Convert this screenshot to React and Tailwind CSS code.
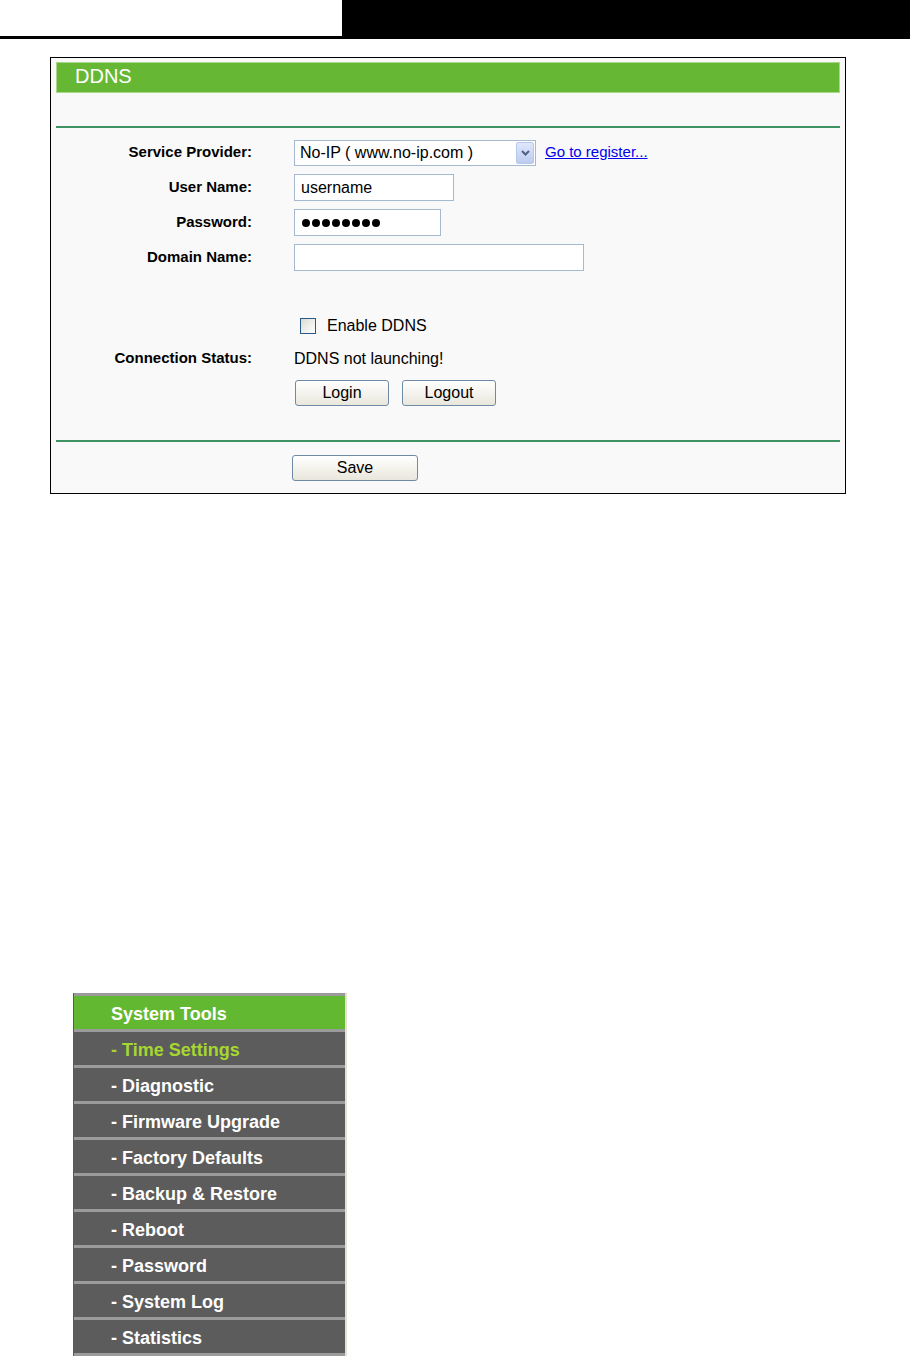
import React from 'react';

const font = { fontFamily: '"Liberation Sans", Arial, sans-serif' };

function Field({ label, children }) {
  return (
    <div className="flex h-[35px] items-center">
      <div className="w-[196px] shrink-0 text-right text-[15px] font-bold text-black">{label}</div>
      <div className="ml-[42px] flex items-center">{children}</div>
    </div>
  );
}

function Button({ children, w }) {
  return (
    <button
      className={`${w} h-[26px] rounded-[3px] border border-[#6f8aa6] bg-gradient-to-b from-white to-[#e9e7dc] text-[16px] leading-none text-black`}
    >
      {children}
    </button>
  );
}

const menu = [
  '- Time Settings',
  '- Diagnostic',
  '- Firmware Upgrade',
  '- Factory Defaults',
  '- Backup & Restore',
  '- Reboot',
  '- Password',
  '- System Log',
  '- Statistics',
];

export default function App() {
  return (
    <div className="min-h-[1357px] bg-white" style={font}>
      {/* Top bar */}
      <div className="flex h-[39px]">
        <div className="w-[342px] border-b-[3px] border-black bg-white" />
        <div className="flex-1 bg-black" />
      </div>

      {/* DDNS panel */}
      <div className="ml-[50px] mt-[18px] w-[796px] border border-black bg-[#f9f9f9] px-[5px] pt-[4px]">
        <div className="flex h-[31px] items-center border border-[#a8d88a] bg-[#66b834] pb-[3px] pl-[18px] text-[20px] text-white">
          DDNS
        </div>
        <div className="h-[33px]" />
        <div className="h-[2px] bg-[#3f9363]" />

        <div className="mt-[7px]">
          <Field label="Service Provider:">
            <div className="flex h-[26px] w-[242px] items-center justify-between border border-[#a5b9d0] bg-white pl-[5px] pr-[1px] text-[16px]">
              <span>No-IP ( www.no-ip.com )</span>
              <span className="flex h-[22px] w-[18px] items-center justify-center rounded-[2px] border border-[#b8c8ea] bg-gradient-to-b from-[#dfe7fb] to-[#bccbef]">
                <svg width="9" height="6" viewBox="0 0 9 6">
                  <path d="M1 1 L4.5 4.5 L8 1" stroke="#4d6185" strokeWidth="2" fill="none" />
                </svg>
              </span>
            </div>
            <a className="ml-[9px] text-[15px] text-[#0000ee] underline">Go to register...</a>
          </Field>
          <Field label="User Name:">
            <div className="flex h-[27px] w-[160px] items-center border border-[#a5b9d0] bg-white pl-[6px] text-[16px]">
              username
            </div>
          </Field>
          <Field label="Password:">
            <div className="flex h-[27px] w-[147px] items-center gap-[2px] border border-[#a5b9d0] bg-white pl-[7px]">
              {Array.from({ length: 8 }).map((_, i) => (
                <span key={i} className="h-[8px] w-[8px] rounded-full bg-black" />
              ))}
            </div>
          </Field>
          <Field label="Domain Name:">
            <div className="h-[27px] w-[290px] border border-[#a5b9d0] bg-white" />
          </Field>
        </div>

        <div className="h-[34px]" />
        <div className="flex h-[34px] items-center pl-[244px]">
          <span className="h-[16px] w-[16px] border border-[#2a5a8a] bg-gradient-to-br from-[#dcdcd6] to-white" />
          <span className="ml-[11px] text-[16px]">Enable DDNS</span>
        </div>
        <div className="flex h-[31px] items-center">
          <div className="w-[196px] shrink-0 text-right text-[15px] font-bold">Connection Status:</div>
          <div className="ml-[42px] text-[16px]">DDNS not launching!</div>
        </div>
        <div className="flex h-[38px] items-center gap-[13px] pl-[239px]">
          <Button w="w-[94px]">Login</Button>
          <Button w="w-[94px]">Logout</Button>
        </div>
        <div className="h-[28px]" />
        <div className="h-[2px] bg-[#3f9363]" />
        <div className="flex h-[51px] items-center pl-[236px]">
          <Button w="w-[126px]">Save</Button>
        </div>
      </div>

      {/* System Tools menu */}
      <div className="ml-[73px] mt-[499px] w-[274px] border-l border-r-2 border-l-[#5a5a5a] border-r-[#e4e1d4]">
        <div className="border-t-[3px] border-[#9b9b9b] bg-[#63b832]">
          <div className="flex h-[33px] items-center pl-[37px] pt-[3px] text-[18px] font-bold text-white">System Tools</div>
        </div>
        {menu.map((item, i) => (
          <div key={item} className="border-t-[3px] border-[#9b9b9b] bg-[#5c5c5c]">
            <div
              className={`flex h-[33px] items-center pl-[37px] pt-[3px] text-[18px] font-bold ${
                i === 0 ? 'text-[#a6d630]' : 'text-white'
              }`}
            >
              {item}
            </div>
          </div>
        ))}
        <div className="h-[3px] bg-[#9b9b9b]" />
      </div>
    </div>
  );
}
